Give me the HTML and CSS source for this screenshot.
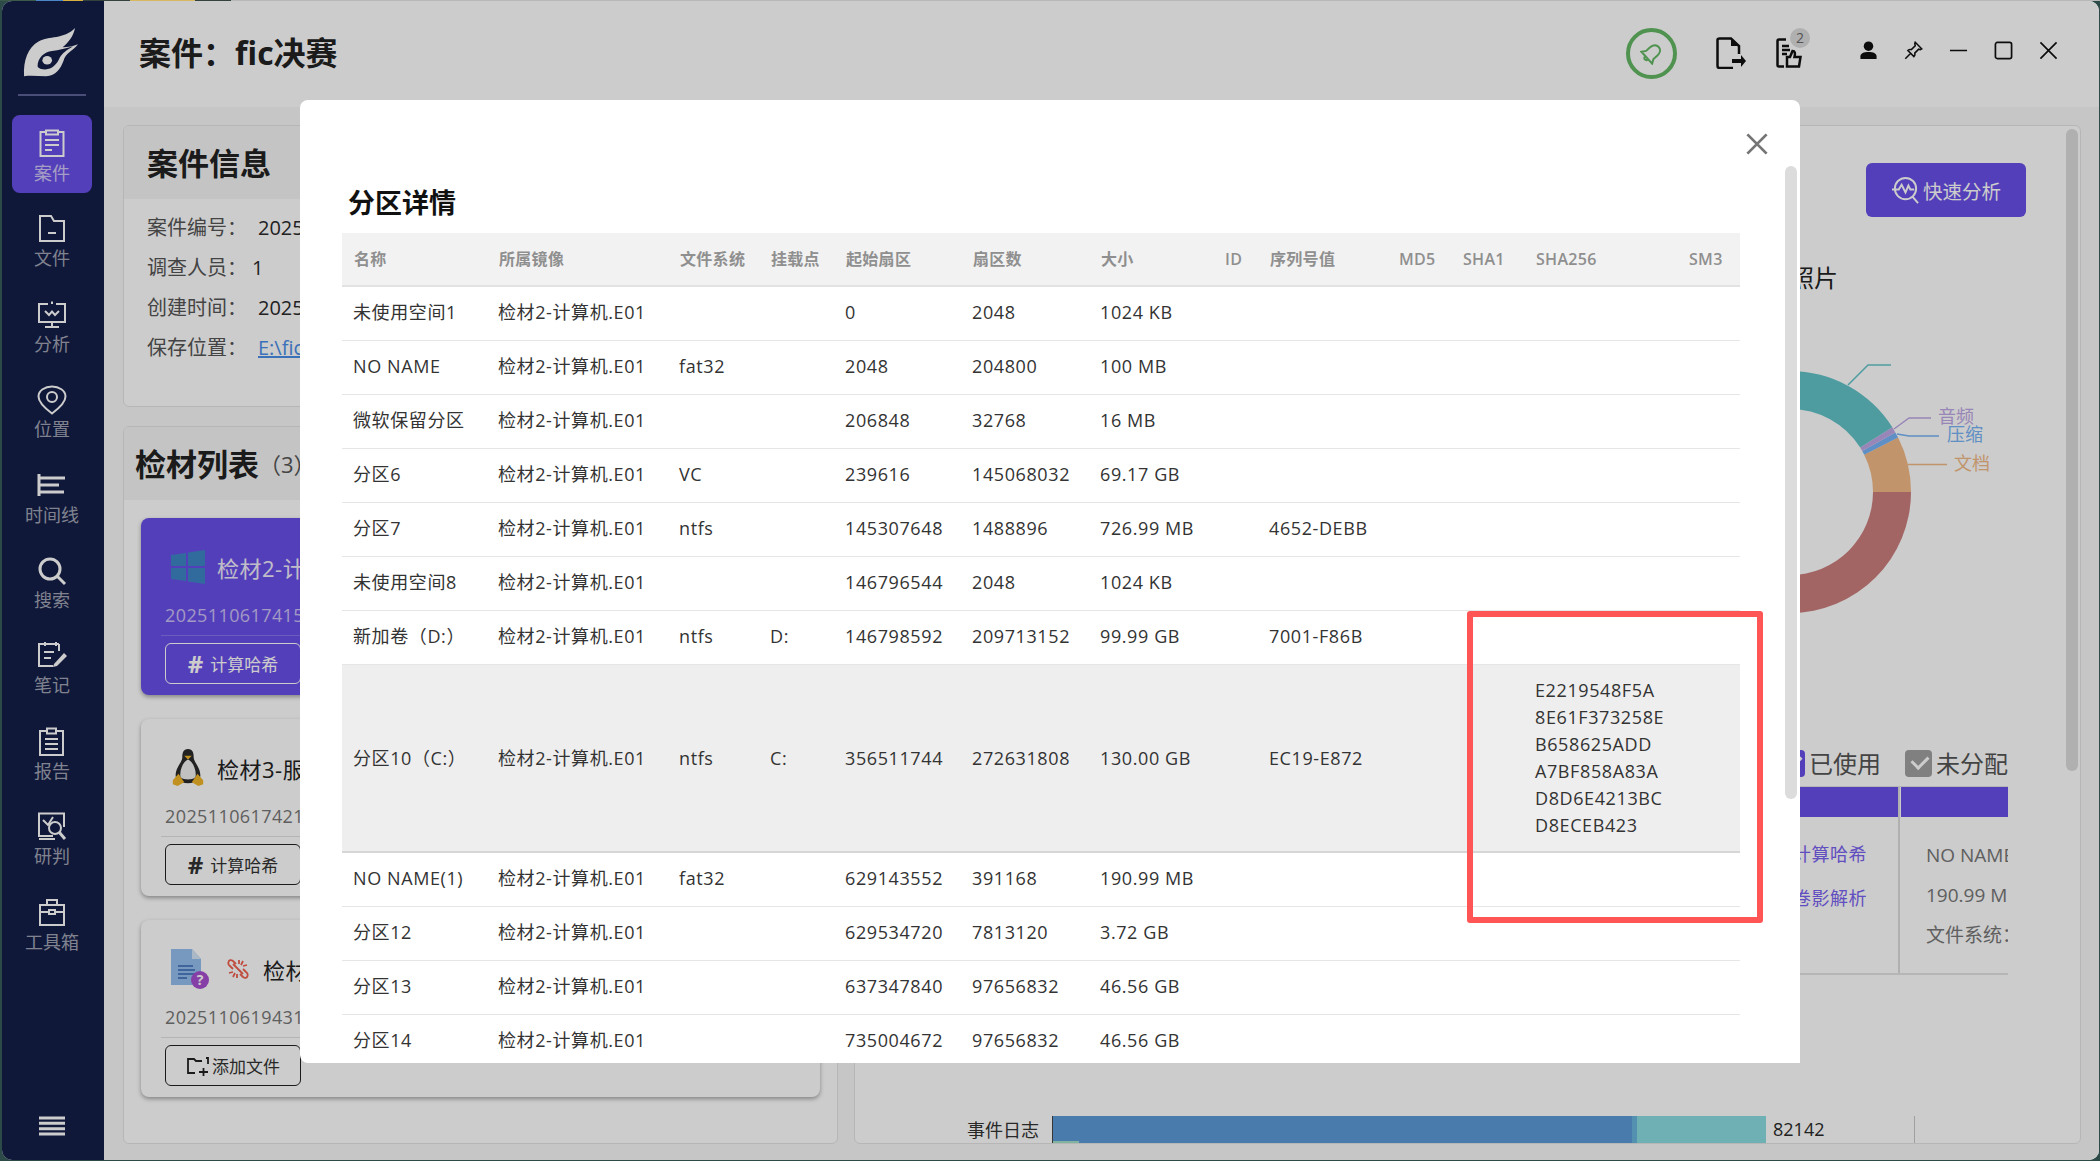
FILE: index.html
```html
<!DOCTYPE html>
<html lang="zh-CN">
<head>
    <meta charset="UTF-8">
    <title>案件：fic决赛</title>
    <link rel="stylesheet" href="styles.css">
</head>
<body>
    <div class="window">
        <div class="sidebar">
            <svg class="logo" viewBox="0 0 60 54">
                <path fill="#fff" d="M1 50C0 34 5 20 16 14C27 8 42 12 54 0C52 9 47 15 41 20C47 20 52 19 57 17C52 24 44 26 42 34C39 42 34 50 24 50C16 50 8 49 1 50Z"/>
                <path fill="#141e48" d="M15 40C15 31 22 25 30 24C37 23 45 21 52 19C45 23 41 26 38 31C35 38 30 43 23 43C19 43 16 42 15 40Z"/>
                <ellipse fill="#fff" cx="25" cy="33.500" rx="5" ry="4.500"/>
            </svg>
            <div class="side-line"></div>
            <div class="menu">
                <div class="menu-item active">
                    <svg viewBox="0 0 30 30"><path d="M9 3H3.500V27H26.500V3H21M9 1.500H21V5.500H9ZM8 11H22M8 16H22M8 21H15"/></svg>
                    <span>案件</span>
                </div>
                <div class="menu-item">
                    <svg viewBox="0 0 30 30"><path d="M3 27V2H14L17 7H27V27ZM11 19H19"/></svg>
                    <span>文件</span>
                </div>
                <div class="menu-item">
                    <svg viewBox="0 0 30 30"><path d="M11 4H2V22H28V4H19M15 1.500V4M8 11L12 15L15 11.500L18 15L22 11M15 22V26M8 27H22"/></svg>
                    <span>分析</span>
                </div>
                <div class="menu-item">
                    <svg viewBox="0 0 30 30"><path d="M15 28.500C9 24 1.500 18 1.500 11.500C1.500 5.500 8 1.500 15 1.500C22 1.500 28.500 5.500 28.500 11.500C28.500 18 21 24 15 28.500Z"/><circle cx="15" cy="12" r="5"/></svg>
                    <span>位置</span>
                </div>
                <div class="menu-item">
                    <svg viewBox="0 0 30 30"><path class="thick" d="M2 3V25M2 7H28M2 14H22M2 21H27"/></svg>
                    <span>时间线</span>
                </div>
                <div class="menu-item">
                    <svg viewBox="0 0 30 30"><circle class="thick" cx="13" cy="13" r="10"/><path class="thick" d="M20 20L28 28"/></svg>
                    <span>搜索</span>
                </div>
                <div class="menu-item">
                    <svg viewBox="0 0 30 30"><path d="M8 3H2V25H16M22 3H19M22 3V10M8 1V5M19 1V5M8 3H19M7 11H17M7 17H14"/><path class="fill" d="M17 23L27 12L30 15L20 25L16 26Z"/></svg>
                    <span>笔记</span>
                </div>
                <div class="menu-item">
                    <svg viewBox="0 0 30 30"><path d="M9 4H3V28H26V4H20M10 1.500H19V6.500H10ZM8 12H21M8 17H21M8 22H21"/></svg>
                    <span>报告</span>
                </div>
                <div class="menu-item">
                    <svg viewBox="0 0 30 30"><path d="M16 24H2V1.500H27V15M2 27H18M6 8L11 13L16 5"/><circle cx="18" cy="16" r="6"/><path class="thick" d="M22 20L28 27"/></svg>
                    <span>研判</span>
                </div>
                <div class="menu-item">
                    <svg viewBox="0 0 30 30"><path d="M3 7H27V27H3ZM10 7V2H20V7M3 14H12M18 14H27M12 12H18V16H12Z"/></svg>
                    <span>工具箱</span>
                </div>
            </div>
            <svg class="side-toggle" viewBox="0 0 28 20"><path d="M1 2H27M1 7.300H27M1 12.700H27M1 18H27"/></svg>
        </div>

        <div class="main">
            <div class="topbar">
                <div class="case-title">案件：fic决赛</div>
                <div class="bell-ring">
                    <svg viewBox="0 0 24 24"><path transform="rotate(48 12 12)" d="M12 3C8.500 3 6.500 6 6.500 10V15L4 19H20L17.500 15V10C17.500 6 15.500 3 12 3ZM10 19C10 22.500 14 22.500 14 19"/></svg>
                </div>
                <svg class="top-icon export" viewBox="0 0 30 32"><path class="line" d="M17 31H3.500C2 31 1.500 30 1.500 29V3C1.500 2 2 1.500 3.500 1.500H15L23 9V17"/><path d="M15 1L23 9H15ZM16 22H25V18L30 24L25 30V26H16Z"/></svg>
                <div class="report-wrap">
                    <svg class="top-icon report" viewBox="0 0 26 30"><path class="line" d="M10 1.500H3C2 1.500 1.500 2 1.500 3V27C1.500 28 2 28.500 3 28.500H8M6 8H13M6 12H14M6 16H11"/><path class="line" d="M11 28.500V19L14 19L16.500 13C19 13 19.500 15 18.500 19H24.500L23 28.500Z"/></svg>
                    <span class="top-badge">2</span>
                </div>
                <div class="win-controls">
                    <svg viewBox="0 0 20 20"><circle class="solid" cx="10" cy="5.500" r="5"/><path class="solid" d="M1.500 19V16C1.500 13 5 11.500 10 11.500C15 11.500 18.500 13 18.500 16V19Z"/></svg>
                    <svg viewBox="0 0 22 22"><path d="M13 1.500L20.500 9L19 10L17 9.500L12.500 14C13 16 12.500 17 11.500 18L4.500 11C5.500 10 7 9.500 8.500 10L13 5.500L12.500 3ZM7.500 14.500L1.500 20.500"/></svg>
                    <svg viewBox="0 0 20 20"><path d="M1 10H19"/></svg>
                    <svg viewBox="0 0 20 20"><rect x="1.500" y="1.500" width="17" height="17" rx="2"/></svg>
                    <svg viewBox="0 0 20 20"><path d="M1.500 1.500L18.500 18.500M18.500 1.500L1.500 18.500"/></svg>
                </div>
            </div>

            <div class="content">
                <div class="left-col">
                    <div class="panel info-panel">
                        <div class="panel-head">
                            <h2 class="panel-title">案件信息</h2>
                        </div>
                        <div class="info-body">
                            <p><span class="info-label">案件编号：</span><span class="info-val">20251106174</span></p>
                            <p><span class="info-label">调查人员：</span><span class="info-val short">1</span></p>
                            <p><span class="info-label">创建时间：</span><span class="info-val">2025-11-06</span></p>
                            <p><span class="info-label">保存位置：</span><a class="info-val link" href="#">E:\fic决赛</a></p>
                        </div>
                    </div>

                    <div class="panel list-panel">
                        <div class="panel-head list-head">
                            <h2 class="panel-title">检材列表</h2>
                            <span class="list-count">（3）</span>
                        </div>
                        <div class="evidence-list">
                            <div class="evidence selected">
                                <div class="evidence-top">
                                    <svg class="os-icon" viewBox="0 0 34 34"><path fill="#3e86c6" d="M0 5L15 3V16H0ZM17 2.500L34 0V16H17ZM0 18H15V31L0 29ZM17 18H34V34L17 31.500Z"/></svg>
                                    <span class="evidence-name">检材2-计算机</span>
                                </div>
                                <div class="evidence-id">20251106174156</div>
                                <div class="evidence-foot">
                                    <button class="ev-btn"><b>#</b>计算哈希</button>
                                </div>
                            </div>
                            <div class="evidence">
                                <div class="evidence-top">
                                    <svg class="os-icon" viewBox="0 0 34 40">
                                        <path fill="#2a2a2a" d="M17 0C12 0 11 4 11 9C11 14 4 19 4 28C4 32 8 36 17 36C26 36 30 32 30 28C30 19 23 14 23 9C23 4 22 0 17 0Z"/>
                                        <path fill="#f2f2f2" d="M17 11C12 13 8 22 9 29C10 33 24 33 25 29C26 22 22 13 17 11Z"/>
                                        <path fill="#f0b429" d="M13 7H21L17 11ZM1 33L7 26L13 35L6 39L1 37ZM33 33L27 26L21 35L28 39L33 37Z"/>
                                    </svg>
                                    <span class="evidence-name">检材3-服务器</span>
                                </div>
                                <div class="evidence-id">20251106174212</div>
                                <div class="evidence-foot">
                                    <button class="ev-btn"><b>#</b>计算哈希</button>
                                </div>
                            </div>
                            <div class="evidence">
                                <div class="evidence-top">
                                    <svg class="doc-icon" viewBox="0 0 38 40">
                                        <path fill="#95c0f0" d="M0 0H21L30 10V36H0Z"/>
                                        <path fill="#d6e6f8" d="M21 0L30 10H21Z"/>
                                        <path stroke="#4f7fc4" stroke-width="2" d="M7 17H22M7 21H24M7 25H24M7 29H16"/>
                                        <circle fill="#a84fd0" cx="29" cy="31" r="9"/>
                                        <text class="doc-mark" x="29" y="36">?</text>
                                    </svg>
                                    <svg class="broken-icon" viewBox="0 0 22 22"><path d="M9 6L6 3C4 1.500 2 2 1.500 4C1 5.500 1.500 7 3 8L6 11M13 16L16 19C18 20.500 20 20 20.500 18C21 16.500 20.500 15 19 14L16 11M6 6L16 16M12 2V6M16 3L14 7M20 7L16 8M2 15L6 14M6 19L8 15M10 20V16"/></svg>
                                    <span class="evidence-name">检材1-未知</span>
                                </div>
                                <div class="evidence-id">20251106194317</div>
                                <div class="evidence-foot">
                                    <button class="ev-btn">
                                        <svg class="add-icon" viewBox="0 0 24 20"><path d="M9 17H2V3H8L10 5H16M20 2H22V8M13 16H22M17.500 12V20"/></svg>添加文件
                                    </button>
                                </div>
                            </div>
                        </div>
                    </div>
                </div>

                <div class="panel chart-panel">
                    <div class="chart-tools">
                        <button class="quick-btn">
                            <svg viewBox="0 0 30 30"><circle cx="15" cy="13" r="11"/><path d="M22 21L28 28M1 14H8L11 9L15 17L18 10L20 14H24"/></svg>快速分析
                        </button>
                    </div>

                    <svg class="donut" viewBox="854 217 1227 532">
                        <text class="donut-title" x="1789" y="287">照片</text>
                        <path fill="#cc7e7e" d="M1910 492A121 121 0 0 1 1789 613V575A83 83 0 0 0 1872 492Z"/>
                        <path fill="#f2ba87" d="M1910 492A121 121 0 0 0 1897.100 437.600L1863.200 454.700A83 83 0 0 1 1872 492Z"/>
                        <path fill="#77b3f5" d="M1897.100 437.600A121 121 0 0 0 1894.300 432.400L1861.200 451.100A83 83 0 0 1 1863.200 454.700Z"/>
                        <path fill="#c0a8e6" d="M1894.300 432.400A121 121 0 0 0 1891.300 427.300L1859.200 447.600A83 83 0 0 1 1861.200 451.100Z"/>
                        <path fill="#63c3c9" d="M1891.300 427.300A121 121 0 0 0 1789 371V409A83 83 0 0 1 1859.200 447.600Z"/>
                        <path class="lead" stroke="#63c3c9" d="M1847 385L1867 365H1890"/>
                        <path class="lead" stroke="#c0a8e6" d="M1893 429L1908 418H1930"/>
                        <path class="lead" stroke="#77b3f5" d="M1896 434L1908 436H1938"/>
                        <path class="lead" stroke="#f2ba87" d="M1907 464.500H1946"/>
                        <text class="donut-label" fill="#c0a8e6" x="1937" y="423">音频</text>
                        <text class="donut-label" fill="#77b3f5" x="1946" y="441">压缩</text>
                        <text class="donut-label" fill="#f2ba87" x="1953" y="470">文档</text>
                    </svg>

                    <div class="legend">
                        <span class="legend-item"><i class="check"></i>已使用</span>
                        <span class="legend-item"><i class="check grey"></i>未分配</span>
                    </div>

                    <div class="strip">
                        <div class="strip-col actions">
                            <div class="strip-head"></div>
                            <div class="strip-body">
                                <a href="#">计算哈希</a>
                                <a href="#">卷影解析</a>
                            </div>
                        </div>
                        <div class="strip-col detail">
                            <div class="strip-head"></div>
                            <div class="strip-body">
                                <p>NO NAME(1)</p>
                                <p>190.99 MB</p>
                                <p>文件系统：fat32</p>
                            </div>
                        </div>
                    </div>

                    <div class="bar-row">
                        <span class="bar-label">事件日志</span>
                        <div class="bar-track">
                            <span class="bar-seg seg-a"></span>
                            <span class="bar-seg seg-b"></span>
                            <span class="bar-seg seg-c"></span>
                        </div>
                        <span class="bar-value">82142</span>
                        <span class="bar-tick"></span>
                        <span class="bar-peek"></span>
                    </div>
                    <div class="panel-scroll"></div>
                </div>
            </div>
        </div>

        <div class="mask"></div>
    </div>

    <div class="modal">
        <svg class="modal-close" viewBox="0 0 24 24"><path d="M1.500 1.500L22.500 22.500M22.500 1.500L1.500 22.500"/></svg>
        <h3 class="modal-title">分区详情</h3>
        <table class="part-table">
            <colgroup>
                <col class="w-name"><col class="w-image"><col class="w-fs"><col class="w-mount">
                <col class="w-start"><col class="w-count"><col class="w-size"><col class="w-id">
                <col class="w-serial"><col class="w-md5"><col class="w-sha1"><col class="w-sha256"><col class="w-sm3">
            </colgroup>
            <thead>
                <tr>
                    <th>名称</th><th>所属镜像</th><th>文件系统</th><th>挂载点</th><th>起始扇区</th><th>扇区数</th><th>大小</th>
                    <th>ID</th><th>序列号值</th><th>MD5</th><th>SHA1</th><th>SHA256</th><th>SM3</th>
                </tr>
            </thead>
            <tbody>
                <tr><td>未使用空间1</td><td>检材2-计算机.E01</td><td></td><td></td><td>0</td><td>2048</td><td>1024 KB</td><td colspan="6"></td></tr>
                <tr><td>NO NAME</td><td>检材2-计算机.E01</td><td>fat32</td><td></td><td>2048</td><td>204800</td><td>100 MB</td><td colspan="6"></td></tr>
                <tr><td>微软保留分区</td><td>检材2-计算机.E01</td><td></td><td></td><td>206848</td><td>32768</td><td>16 MB</td><td colspan="6"></td></tr>
                <tr><td>分区6</td><td>检材2-计算机.E01</td><td>VC</td><td></td><td>239616</td><td>145068032</td><td>69.17 GB</td><td colspan="6"></td></tr>
                <tr><td>分区7</td><td>检材2-计算机.E01</td><td>ntfs</td><td></td><td>145307648</td><td>1488896</td><td>726.99 MB</td><td></td><td>4652-DEBB</td><td colspan="4"></td></tr>
                <tr><td>未使用空间8</td><td>检材2-计算机.E01</td><td></td><td></td><td>146796544</td><td>2048</td><td>1024 KB</td><td colspan="6"></td></tr>
                <tr><td>新加卷（D:）</td><td>检材2-计算机.E01</td><td>ntfs</td><td>D:</td><td>146798592</td><td>209713152</td><td>99.99 GB</td><td></td><td>7001-F86B</td><td colspan="4"></td></tr>
                <tr class="hovered"><td>分区10（C:）</td><td>检材2-计算机.E01</td><td>ntfs</td><td>C:</td><td>356511744</td><td>272631808</td><td>130.00 GB</td><td></td><td>EC19-E872</td><td></td><td></td><td>E2219548F5A<br>8E61F373258E<br>B658625ADD<br>A7BF858A83A<br>D8D6E4213BC<br>D8ECEB423</td><td></td></tr>
                <tr><td>NO NAME(1)</td><td>检材2-计算机.E01</td><td>fat32</td><td></td><td>629143552</td><td>391168</td><td>190.99 MB</td><td colspan="6"></td></tr>
                <tr><td>分区12</td><td>检材2-计算机.E01</td><td></td><td></td><td>629534720</td><td>7813120</td><td>3.72 GB</td><td colspan="6"></td></tr>
                <tr><td>分区13</td><td>检材2-计算机.E01</td><td></td><td></td><td>637347840</td><td>97656832</td><td>46.56 GB</td><td colspan="6"></td></tr>
                <tr><td>分区14</td><td>检材2-计算机.E01</td><td></td><td></td><td>735004672</td><td>97656832</td><td>46.56 GB</td><td colspan="6"></td></tr>
            </tbody>
        </table>
        <div class="modal-scroll"></div>
        <div class="red-mark"></div>
    </div>
</body>
</html>
```

FILE: styles.css
```css
* {
    box-sizing: border-box;
}

body {
    margin: 0;
    width: 2100px;
    height: 1161px;
    overflow: hidden;
    position: relative;
    font-family: "Open Sans", "Noto Sans CJK SC", sans-serif;
    color: #2a2a2a;
    background: #2b4a48 linear-gradient(to right, #3d5a48 36px, #4a86c8 36px, #4a86c8 63px, #d8b040 63px, #d8b040 83px, #33413f 83px, #33413f 130px, #d8b860 130px, #d8b860 195px, #33413f 195px, #33413f 231px, #b8b8b8 231px) no-repeat 0 0 / 100% 1px;
}

p,
h2,
h3 {
    margin: 0;
}

button {
    font-family: inherit;
}

/* fenetre */
.window {
    position: absolute;
    left: 2px;
    top: 1px;
    width: 2097px;
    height: 1159px;
    display: flex;
    border-radius: 10px;
    overflow: hidden;
    background: #fff;
}

.mask {
    position: absolute;
    inset: 0;
    background: rgba(0, 0, 0, 0.2);
}

/* sidebar */
.sidebar {
    width: 102px;
    flex: none;
    padding-right: 2px;
    background: #141e48;
    display: flex;
    flex-direction: column;
    align-items: center;
}

.logo {
    width: 58px;
    height: 52px;
    margin-top: 27px;
}

.side-line {
    width: 68px;
    height: 2px;
    margin-top: 14px;
    background: #5a6296;
}

.menu {
    width: 80px;
    margin-top: 19px;
    display: flex;
    flex-direction: column;
    gap: 7.400px;
}

.menu-item {
    height: 78px;
    padding-top: 14px;
    border-radius: 8px;
    display: flex;
    flex-direction: column;
    align-items: center;
    font-size: 18px;
    line-height: 24px;
    color: #a0a4b3;
}

.menu-item svg {
    width: 30px;
    height: 30px;
    margin-bottom: 2px;
    fill: none;
    stroke: #fff;
    stroke-width: 2;
}

.menu-item svg .thick {
    stroke-width: 3;
}

.menu-item svg .fill {
    fill: #fff;
    stroke: none;
}

.menu-item.active {
    background: #6a4fea;
    color: #cfc6f5;
}

.side-toggle {
    width: 28px;
    height: 20px;
    margin-top: auto;
    margin-bottom: 24px;
    fill: none;
    stroke: #fff;
    stroke-width: 3;
}

/* topbar */
.main {
    flex: 1;
    min-width: 0;
    display: flex;
    flex-direction: column;
}

.topbar {
    height: 106px;
    flex: none;
    padding-bottom: 2px;
    display: flex;
    align-items: center;
    background: #fff;
}

.case-title {
    margin-left: 35px;
    margin-right: auto;
    margin-bottom: 5px;
    font-size: 32px;
    font-weight: 700;
    color: #222;
}

.bell-ring {
    width: 51px;
    height: 51px;
    border: 4px solid #64b864;
    border-radius: 50%;
    display: flex;
    align-items: center;
    justify-content: center;
}

.bell-ring svg {
    width: 24px;
    height: 24px;
    fill: none;
    stroke: #64b864;
    stroke-width: 2;
}

.top-icon {
    fill: #111;
}

.top-icon .line {
    fill: none;
    stroke: #111;
    stroke-width: 2.500;
}

.export {
    width: 30px;
    height: 32px;
    margin-left: 39px;
}

.report-wrap {
    position: relative;
    margin-left: 30px;
    height: 30px;
}

.report {
    width: 26px;
    height: 30px;
}

.top-badge {
    position: absolute;
    left: 14px;
    top: -10px;
    width: 20px;
    height: 20px;
    border-radius: 50%;
    background: #dcdcdc;
    color: #6a6a6a;
    font-size: 14px;
    line-height: 20px;
    text-align: center;
}

.win-controls {
    margin-left: 57px;
    margin-right: 41px;
    margin-bottom: 5px;
    display: flex;
    align-items: center;
    gap: 26px;
}

.win-controls svg {
    width: 19px;
    height: 19px;
    fill: none;
    stroke: #111;
    stroke-width: 1.800;
}

.win-controls svg .solid {
    fill: #111;
    stroke: none;
}

/* contenu */
.content {
    flex: 1;
    min-height: 0;
    display: flex;
    gap: 16px;
    padding: 18px 18px 16px 19px;
    background: #f8f8f8;
}

.left-col {
    width: 715px;
    flex: none;
    display: flex;
    flex-direction: column;
    gap: 19px;
}

.panel {
    background: #fff;
    border: 1px solid #e4e4e4;
    border-radius: 6px;
    overflow: hidden;
}

.info-panel {
    height: 282px;
    flex: none;
}

.panel-head {
    height: 73px;
    padding-left: 23px;
    padding-bottom: 2px;
    display: flex;
    align-items: center;
    background: #f6f6f6;
}

.panel-title {
    font-size: 31px;
    font-weight: 700;
    color: #222;
}

.info-body {
    padding-top: 9px;
    padding-left: 23px;
    font-size: 20px;
    line-height: 40px;
}

.info-label {
    color: #555;
}

.info-val {
    margin-left: 11px;
}

.info-val.short {
    margin-left: 5px;
}

.info-val.link {
    color: #4a8ee8;
}

.list-panel {
    flex: 1;
}

.list-head {
    padding-left: 11px;
}

.list-count {
    font-size: 22px;
    color: #555;
}

.evidence-list {
    padding: 18px 17px 0 17px;
    display: flex;
    flex-direction: column;
    gap: 24px;
}

.evidence {
    height: 177px;
    background: #fff;
    border-radius: 8px;
    box-shadow: 0 2px 4px rgba(0, 0, 0, 0.35);
    color: #222;
}

.evidence-top {
    height: 83px;
    padding-left: 30px;
    padding-top: 15px;
    display: flex;
    align-items: center;
}

.os-icon {
    width: 34px;
    height: 38px;
}

.doc-icon {
    width: 38px;
    height: 40px;
}

.doc-mark {
    fill: #fff;
    font-size: 14px;
    font-weight: 700;
    text-anchor: middle;
}

.broken-icon {
    width: 22px;
    height: 22px;
    margin-left: 18px;
    margin-right: 2px;
    fill: none;
    stroke: #f0604f;
    stroke-width: 1.800;
}

.evidence-name {
    margin-left: 12px;
    font-size: 22px;
    letter-spacing: 0.5px;
}

.evidence-id {
    padding-left: 24px;
    font-size: 18px;
    line-height: 28px;
    letter-spacing: 0.4px;
    color: #777;
}

.evidence-foot {
    margin: 6px 0 0 20px;
    padding: 7px 0 0 4px;
    border-top: 1px solid #e2e2e2;
}

.ev-btn {
    width: 136px;
    height: 41px;
    padding: 0;
    background: transparent;
    border: 1.500px solid #222;
    border-radius: 6px;
    display: flex;
    align-items: center;
    justify-content: center;
    color: #333;
    font-size: 17px;
}

.ev-btn b {
    margin-right: 7px;
    font-size: 24px;
    line-height: 24px;
}

.add-icon {
    width: 24px;
    height: 20px;
    margin-right: 2px;
    fill: none;
    stroke: #222;
    stroke-width: 1.800;
}

.evidence.selected {
    background: #6a4fea;
    color: #f0edfb;
}

.selected .evidence-id {
    color: #cbc0f5;
}

.selected .evidence-foot {
    border-top-color: #8873ee;
}

.selected .ev-btn {
    border-color: #fff;
    color: #fff;
}

/* panneau de droite */
.chart-panel {
    flex: 1;
    min-width: 0;
    position: relative;
    display: flex;
    flex-direction: column;
}

.chart-tools {
    padding-top: 37px;
    padding-right: 54px;
    display: flex;
    justify-content: flex-end;
}

.quick-btn {
    width: 160px;
    height: 54px;
    padding: 0;
    border: none;
    border-radius: 6px;
    background: #6a4fea;
    display: flex;
    align-items: center;
    justify-content: center;
    gap: 3px;
    color: #fff;
    font-size: 19.500px;
}

.quick-btn svg {
    width: 29px;
    height: 29px;
    fill: none;
    stroke: #fff;
    stroke-width: 2;
}

.donut {
    display: block;
    width: 1227px;
    height: 532px;
    flex: none;
}

.donut-title {
    font-size: 24px;
    fill: #222;
}

.donut-label {
    font-size: 18px;
}

.lead {
    fill: none;
    stroke-width: 1.500;
}

.legend {
    margin-top: 1px;
    margin-right: 72px;
    display: flex;
    justify-content: flex-end;
    gap: 24px;
    font-size: 24px;
    line-height: 27px;
    color: #555;
}

.legend-item {
    display: flex;
    align-items: center;
    gap: 4px;
}

.check {
    width: 27px;
    height: 27px;
    border-radius: 4px;
    background: #6a4fea;
    position: relative;
}

.check::after {
    content: "";
    position: absolute;
    left: 7px;
    top: 5px;
    width: 13px;
    height: 8px;
    border-left: 3px solid #fff;
    border-bottom: 3px solid #fff;
    transform: rotate(-45deg);
}

.check.grey {
    background: #a0a0a0;
}

.strip {
    margin-top: 9px;
    margin-right: 72px;
    height: 189px;
    flex: none;
    display: flex;
    justify-content: flex-end;
    border-top: 1px solid #e4e4e4;
    border-bottom: 2px solid #e4e4e4;
}

.strip-col {
    overflow: hidden;
}

.strip-head {
    height: 30px;
    background: #6a4fea;
}

.strip-col.actions {
    width: 243px;
    border-right: 2px solid #dcdcdc;
}

.strip-col.actions .strip-body {
    padding: 15px 0 0 136px;
    font-size: 18px;
    line-height: 44px;
    letter-spacing: 0.5px;
}

.strip-col.actions a {
    display: block;
    color: #7a62f0;
    text-decoration: none;
}

.strip-col.detail {
    width: 107px;
    margin-left: 1px;
}

.strip-col.detail .strip-body {
    padding: 18px 0 0 25px;
    font-size: 19px;
    line-height: 40px;
    color: #777;
    white-space: nowrap;
}

.bar-row {
    position: relative;
    height: 27px;
    margin-top: auto;
    display: flex;
    align-items: center;
    padding-left: 112px;
    font-size: 18px;
}

.bar-label {
    width: 74px;
    margin-top: -2px;
    color: #333;
}

.bar-track {
    display: flex;
    height: 100%;
    margin-left: 11px;
    border-left: 1px solid #444;
}

.bar-seg {
    display: block;
    height: 100%;
}

.seg-a {
    width: 579px;
    background: #5c9cd8;
}

.seg-b {
    width: 5px;
    background: #6ab4dc;
}

.seg-c {
    width: 129px;
    background: #8bdde2;
}

.bar-value {
    width: 148px;
    margin-top: -2px;
    padding-left: 7px;
}

.bar-tick {
    width: 1px;
    height: 100%;
    background: #c8c8c8;
}

.bar-peek {
    position: absolute;
    left: 198px;
    bottom: 0;
    width: 26px;
    height: 2px;
    background: #a0e0c8;
}

.panel-scroll {
    position: absolute;
    right: 2px;
    top: 3px;
    width: 12px;
    height: 642px;
    border-radius: 6px;
    background: #dcdcdc;
}

/* modal */
.modal {
    position: absolute;
    left: 300px;
    top: 100px;
    width: 1500px;
    height: 963px;
    padding: 84px 60px 0 42px;
    overflow: hidden;
    background: #fff;
    border-radius: 8px 8px 0 8px;
}

.modal-close {
    position: absolute;
    left: 1446px;
    top: 33px;
    width: 22px;
    height: 22px;
    fill: none;
    stroke: #757575;
    stroke-width: 3;
}

.modal-title {
    margin-left: 6px;
    height: 49px;
    font-size: 27px;
    line-height: 38px;
    font-weight: 700;
    color: #111;
}

.part-table {
    width: 1398px;
    table-layout: fixed;
    border-collapse: collapse;
    font-size: 18px;
    line-height: 27px;
    letter-spacing: 0.6px;
    color: #333;
}

.w-name { width: 145px; }
.w-image { width: 181px; }
.w-fs { width: 91px; }
.w-mount { width: 75px; }
.w-start { width: 127px; }
.w-count { width: 128px; }
.w-size { width: 124px; }
.w-id { width: 45px; }
.w-serial { width: 129px; }
.w-md5 { width: 64px; }
.w-sha1 { width: 73px; }
.w-sha256 { width: 153px; }
.w-sm3 { width: 63px; }

.part-table th {
    height: 53px;
    padding: 0 0 0 12px;
    background: #f2f2f2;
    border-bottom: 2px solid #e2e2e2;
    text-align: left;
    font-size: 16px;
    font-weight: 600;
    letter-spacing: 0.3px;
    color: #8f8f8f;
    white-space: nowrap;
}

.part-table td {
    padding: 12px 0 14px 11px;
    border-bottom: 1px solid #e6e6e6;
    white-space: nowrap;
}

.part-table tr.hovered td {
    padding-top: 12px;
    padding-bottom: 12px;
    background: #eeeeee;
    border-bottom: 2px solid #d6d6d6;
}

.modal-scroll {
    position: absolute;
    left: 1485px;
    top: 66px;
    width: 12px;
    height: 633px;
    border-radius: 6px;
    background: #dcdcdc;
}

.red-mark {
    position: absolute;
    left: 1167px;
    top: 511px;
    width: 296px;
    height: 312px;
    border: 6px solid #ff5555;
    border-radius: 3px;
}
```
